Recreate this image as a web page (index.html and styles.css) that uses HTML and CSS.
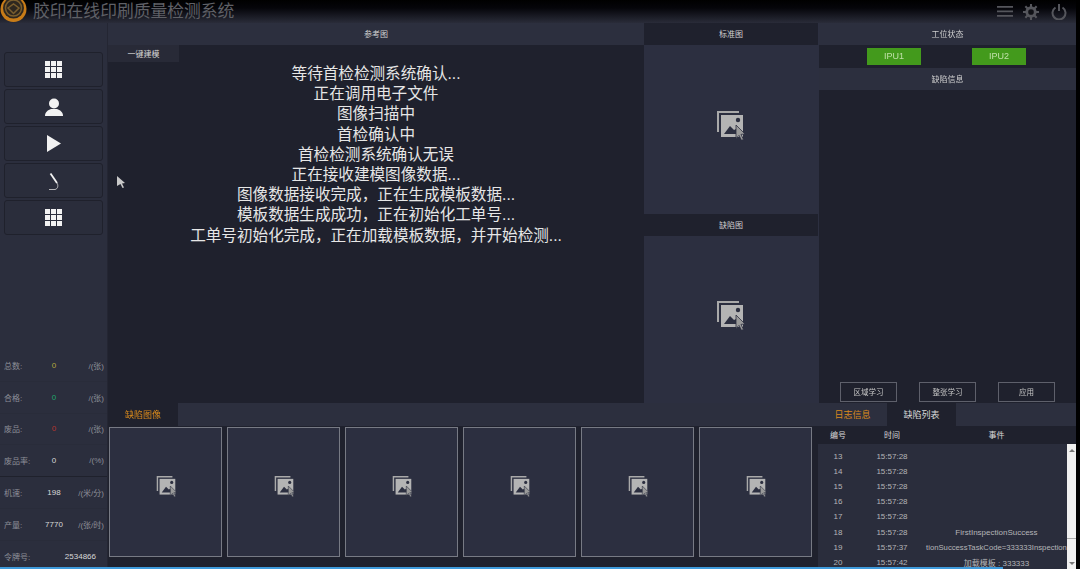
FILE: index.html
```html
<!DOCTYPE html>
<html lang="zh-CN">
<head>
    <meta charset="UTF-8">
    <meta name="viewport" content="width=device-width, initial-scale=1.0">
    <title>胶印在线印刷质量检测系统</title>
    <link rel="stylesheet" href="styles.css">
</head>
<body>
    <svg class="defs" width="0" height="0">
        <symbol id="pic" viewBox="0 0 28 30">
            <path d="M1 1h22v2H3v19H1z" fill="#a9a9a9"/>
            <path d="M5 5h22v22H5z" fill="#b4b4b4"/>
            <circle cx="22" cy="10" r="2.2" fill="#2c2f40"/>
            <path d="M8 24l6-8 4 4 2-1 4 5z" fill="#2c2f40"/>
            <path d="M20 15l9 9-4 .4 2.5 5-2 1-2.500-5-3 3z" fill="#9a9a9a" stroke="#2c2f40" stroke-width=".8"/>
        </symbol>
        <symbol id="dots" viewBox="0 0 17 17">
            <path d="M0 0h5v5H0zM6 0h5v5H6zM12 0h5v5h-5zM0 6h5v5H0zM6 6h5v5H6zM12 6h5v5h-5zM0 12h5v5H0zM6 12h5v5H6zM12 12h5v5h-5z" fill="#f2f2f2"/>
        </symbol>
    </svg>

    <header class="topbar">
        <svg class="logo" width="27" height="23" viewBox="0 0 27 23">
            <circle cx="13.500" cy="9" r="13" fill="#c87c18"/>
            <circle cx="13.500" cy="8" r="10.500" fill="#2e271f"/>
            <circle cx="13.500" cy="8" r="8" fill="none" stroke="#7a5e2e" stroke-width="1.500"/>
            <path d="M8 8l5.500 5.500L19 8l-5.500-4z" fill="none" stroke="#7a5e2e" stroke-width="1.500"/>
        </svg>
        <h1>胶印在线印刷质量检测系统</h1>
        <div class="top-icons">
            <svg class="icon-menu" width="16" height="11" viewBox="0 0 16 11"><path d="M0 0h16v1.800H0zM0 4.500h16v1.800H0zM0 9h16v1.800H0z" fill="#55565c"/></svg>
            <svg class="icon-gear" width="16" height="16" viewBox="0 0 17 17"><circle cx="8.500" cy="8.500" r="4.500" fill="none" stroke="#55565c" stroke-width="3"/><path d="M8.500 0v17M0 8.500h17M2.500 2.500l12 12M14.500 2.500l-12 12" stroke="#55565c" stroke-width="2.200"/><circle cx="8.500" cy="8.500" r="3" fill="#101116"/></svg>
            <svg width="16" height="16" viewBox="0 0 16 16"><path d="M4.500 3.500a6.500 6.500 0 1 0 7 0M8 0v7" fill="none" stroke="#55565c" stroke-width="2"/></svg>
        </div>
    </header>

    <div class="layout">
        <aside class="sidebar">
            <nav class="side-nav">
                <button class="nav-btn"><svg width="17" height="17"><use href="#dots"/></svg></button>
                <button class="nav-btn">
                    <svg width="18" height="18" viewBox="0 0 18 18"><circle cx="9" cy="5.500" r="5" fill="#f2f2f2"/><path d="M0 18c0-4 3-6 6-7h6c3 1 6 3 6 7z" fill="#f2f2f2"/></svg>
                </button>
                <button class="nav-btn"><svg width="14" height="17" viewBox="0 0 14 17"><path d="M0 0l14 8.500L0 17z" fill="#f2f2f2"/></svg></button>
                <button class="nav-btn">
                    <svg width="12" height="18" viewBox="0 0 12 18"><path d="M2.500 1.500L9 11" stroke="#f2f2f2" stroke-width="1.800" fill="none"/><path d="M9 11c1.500 2 1 6-2 6.500H1" stroke="#d8d8d8" stroke-width=".8" fill="none"/></svg>
                </button>
                <button class="nav-btn"><svg width="17" height="17"><use href="#dots"/></svg></button>
            </nav>
            <div class="stats">
                <div class="stat"><span>总数:</span><b class="yellow">0</b><span>/(张)</span></div>
                <div class="stat"><span>合格:</span><b class="green">0</b><span>/(张)</span></div>
                <div class="stat"><span>废品:</span><b class="red">0</b><span>/(张)</span></div>
                <div class="stat strong-line"><span>废品率:</span><b>0</b><span>/(%)</span></div>
                <div class="stat"><span>机速:</span><b>198</b><span>/(米/分)</span></div>
                <div class="stat"><span>产量:</span><b>7770</b><span>/(张/时)</span></div>
                <div class="stat token"><span>令牌号:</span><b>2534866</b></div>
            </div>
        </aside>

        <main class="main">
            <section class="upper">
                <div class="col col-ref">
                    <div class="col-title">参考图</div>
                    <div class="ref-body">
                        <div class="tab-build">一键建模</div>
                        <div class="messages">
                            <p>等待首检检测系统确认...</p>
                            <p>正在调用电子文件</p>
                            <p>图像扫描中</p>
                            <p>首检确认中</p>
                            <p>首检检测系统确认无误</p>
                            <p>正在接收建模图像数据...</p>
                            <p>图像数据接收完成，正在生成模板数据...</p>
                            <p>模板数据生成成功，正在初始化工单号...</p>
                            <p>工单号初始化完成，正在加载模板数据，并开始检测...</p>
                        </div>
                    </div>
                </div>
                <div class="col col-pics">
                    <div class="col-title dark">标准图</div>
                    <div class="pic-box first"><svg width="30" height="30"><use href="#pic"/></svg></div>
                    <div class="col-title dark">缺陷图</div>
                    <div class="pic-box"><svg width="30" height="30"><use href="#pic"/></svg></div>
                </div>
                <div class="col col-status">
                    <div class="col-title">工位状态</div>
                    <div class="ipu-row">
                        <span class="ipu">IPU1</span>
                        <span class="ipu">IPU2</span>
                    </div>
                    <div class="col-title">缺陷信息</div>
                    <div class="defect-info"></div>
                    <div class="actions">
                        <button class="action">区域学习</button>
                        <button class="action">整张学习</button>
                        <button class="action">应用</button>
                    </div>
                </div>
            </section>

            <section class="lower">
                <div class="thumbs-panel">
                    <div class="tabs"><span class="tab active-orange">缺陷图像</span></div>
                    <div class="thumbs">
                        <div class="thumb"><svg width="20" height="22"><use href="#pic"/></svg></div>
                        <div class="thumb"><svg width="20" height="22"><use href="#pic"/></svg></div>
                        <div class="thumb"><svg width="20" height="22"><use href="#pic"/></svg></div>
                        <div class="thumb"><svg width="20" height="22"><use href="#pic"/></svg></div>
                        <div class="thumb"><svg width="20" height="22"><use href="#pic"/></svg></div>
                        <div class="thumb"><svg width="20" height="22"><use href="#pic"/></svg></div>
                    </div>
                </div>
                <div class="log-panel">
                    <div class="tabs">
                        <span class="tab log-tab orange">日志信息</span>
                        <span class="tab log-tab current">缺陷列表</span>
                    </div>
                    <div class="log-head"><span>编号</span><span>时间</span><span>事件</span></div>
                    <div class="log-wrap">
                        <div class="log-rows">
                            <div class="log-row"><span>13</span><span>15:57:28</span><span></span></div>
                            <div class="log-row"><span>14</span><span>15:57:28</span><span></span></div>
                            <div class="log-row"><span>15</span><span>15:57:28</span><span></span></div>
                            <div class="log-row"><span>16</span><span>15:57:28</span><span></span></div>
                            <div class="log-row"><span>17</span><span>15:57:28</span><span></span></div>
                            <div class="log-row"><span>18</span><span>15:57:28</span><span>FirstInspectionSuccess</span></div>
                            <div class="log-row"><span>19</span><span>15:57:37</span><span class="tight">tionSuccessTaskCode=333333Inspection</span></div>
                            <div class="log-row"><span>20</span><span>15:57:42</span><span>加载模板 : 333333</span></div>
                        </div>
                        <div class="scrollbar">
                            <span class="arrow up"></span>
                            <span class="thumb-bar"></span>
                            <span class="arrow down"></span>
                        </div>
                    </div>
                </div>
            </section>
        </main>
        <div class="edge"></div>
    </div>

    <!-- 鼠标和底部任务条 -->
    <svg class="cursor" width="9" height="12" viewBox="0 0 9 12"><path d="M0 0l8 7-3 .5 2 4-1.500.5-2-4L0 10z" fill="#c9c9c9"/></svg>
    <div class="task-strip"></div>
</body>
</html>
```

FILE: styles.css
```css
* {
    box-sizing: border-box;
}
body {
    margin: 0;
    width: 1080px;
    height: 569px;
    overflow: hidden;
    position: relative;
    background-color: #1f212d;
    color: #d8d8d8;
    font-family: "Liberation Sans", "Noto Sans CJK SC", sans-serif;
    font-size: 8px;
    filter: blur(.35px);
}
.defs {
    position: absolute;
}
p, h1 {
    margin: 0;
}

/* 顶部 */
.topbar {
    height: 23px;
    display: flex;
    align-items: center;
    background: linear-gradient(#000, #05050a 35%, #2a2c39);
}
.logo {
    flex-shrink: 0;
}
.topbar h1 {
    margin-left: 6px;
    font-size: 16.800px;
    line-height: 21px;
    font-weight: 400;
    color: #5f6066;
}
.top-icons {
    margin-left: auto;
    margin-right: 13px;
    display: flex;
    align-items: center;
}
.icon-gear {
    margin: 0 12px 0 10px;
}

.layout {
    height: 546px;
    display: flex;
}

/* 左侧 */
.sidebar {
    width: 108px;
    background-color: #2b2e3d;
    border-right: 1px solid #242633;
    flex-shrink: 0;
    overflow: hidden;
}
.side-nav {
    padding: 29px 4px 0 4px;
    display: flex;
    flex-direction: column;
    gap: 2px;
}
.nav-btn {
    height: 35px;
    padding: 0;
    display: flex;
    align-items: center;
    justify-content: center;
    background-color: #2a2d3b;
    border: 1px solid #1f212c;
    border-radius: 3px;
}
.stats {
    margin-top: 115px;
}
.stat {
    height: 31.800px;
    padding: 0 3px 0 4px;
    display: grid;
    grid-template-columns: 32px 36px 1fr;
    align-items: center;
    color: #8d8f98;
    border-bottom: 1px solid #292c3a;
}
.stat.strong-line {
    border-bottom-color: #1f212c;
}
.stat b {
    font-weight: 400;
    text-align: center;
    color: #d8d8d8;
}
.stat span:last-child {
    text-align: right;
}
.stat .yellow { color: #b3a63d; }
.stat .green { color: #1fa56b; }
.stat .red { color: #b5352f; }
.stat.token {
    grid-template-columns: 36px 1fr;
    padding-right: 11px;
    border-bottom: 0;
}
.stat.token b {
    text-align: right;
}

/* 主区域 */
.main {
    width: 968px;
    display: flex;
    flex-direction: column;
}
.upper {
    height: 380px;
    display: grid;
    grid-template-columns: 536px 174px 258px;
}
.col {
    display: flex;
    flex-direction: column;
    min-height: 0;
}
.col-title {
    height: 22px;
    line-height: 24px;
    text-align: center;
    background-color: #2c2f3e;
    color: #cfcfcf;
    flex-shrink: 0;
}
.col-title.dark {
    background-color: #1f212d;
}
.ref-body {
    flex: 1;
    background-color: #1f212d;
}
.tab-build {
    width: 71px;
    height: 17px;
    line-height: 19px;
    text-align: center;
    background-color: #282a37;
}
.messages {
    margin-top: 2px;
    text-align: center;
    font-size: 15.600px;
    line-height: 20.200px;
    color: #e6e6e6;
}
.col-pics {
    background-color: #2c2f40;
}
.pic-box {
    flex: 1;
    padding: 0 2px 9px 0;
    display: flex;
    align-items: center;
    justify-content: center;
    background-color: #2c2f40;
}
.pic-box.first {
    flex: none;
    height: 169px;
}
.col-status {
    border-left: 1px solid #2c2f40;
}
.ipu-row {
    height: 23px;
    display: flex;
    align-items: center;
    background-color: #1f212d;
    padding-left: 48px;
    gap: 51px;
}
.ipu {
    width: 54px;
    height: 17px;
    line-height: 17px;
    text-align: center;
    font-size: 9px;
    color: #bfe0a8;
    background-color: #439a1c;
}
.defect-info {
    flex: 1;
}
.actions {
    height: 22px;
    padding: 0 0 1px 21px;
    display: flex;
    align-items: center;
    gap: 22px;
}
.action {
    width: 57px;
    height: 20px;
    padding: 0;
    background: none;
    border: 1px solid #5e606b;
    color: #c4c4c4;
    font: inherit;
    font-size: 7.500px;
}

/* 下部 */
.lower {
    flex: 1;
    display: grid;
    grid-template-columns: 710px 258px;
    min-height: 0;
}
.tabs {
    height: 23px;
    display: flex;
    background-color: #2c2f3e;
}
.tab {
    display: block;
    line-height: 25px;
    text-align: center;
    font-size: 9px;
}
.active-orange {
    width: 70px;
    color: #d98a1c;
    background-color: #1f212d;
}
.thumbs {
    padding: 1px 8px 0 1px;
    display: grid;
    grid-template-columns: repeat(6, 113px);
    gap: 5px;
}
.thumb {
    height: 130px;
    padding-bottom: 12px;
    display: flex;
    align-items: center;
    justify-content: center;
    background-color: #2c2f40;
    border: 1px solid #777a84;
}
.log-tab {
    width: 69px;
}
.orange {
    color: #d98a1c;
}
.current {
    color: #d8d8d8;
    background-color: #1f212d;
}
.log-head {
    height: 18px;
    padding: 0 9px 2px 0;
    display: grid;
    grid-template-columns: 40px 68px 141px;
    align-items: center;
    text-align: center;
    background-color: #1f212d;
}
.log-wrap {
    display: flex;
    height: 125px;
    background-color: #2a2d3c;
}
.log-rows {
    width: 249px;
    padding-top: 5px;
    overflow: hidden;
}
.log-row {
    height: 15.100px;
    display: grid;
    grid-template-columns: 40px 68px 141px;
    align-items: center;
    text-align: center;
    white-space: nowrap;
    color: #b5b5b8;
}
.tight {
    font-size: 7.700px;
}
.scrollbar {
    width: 9px;
    background-color: #f0f0f0;
    display: flex;
    flex-direction: column;
    align-items: center;
}
.arrow {
    width: 0;
    height: 0;
    border-left: 3px solid transparent;
    border-right: 3px solid transparent;
}
.arrow.up {
    margin-top: 5px;
    border-bottom: 3px solid #777;
}
.arrow.down {
    margin-top: auto;
    margin-bottom: 4px;
    border-top: 3px solid #777;
}
.thumb-bar {
    width: 100%;
    height: 84px;
    margin-top: 3px;
    border-bottom: 1px solid #aaa;
}
.edge {
    width: 4px;
    background-color: #000;
    position: absolute;
    top: 0;
    right: 0;
    height: 569px;
}
.cursor {
    position: absolute;
    left: 117px;
    top: 176px;
}
.task-strip {
    position: absolute;
    left: 0;
    bottom: 0;
    width: 1003px;
    height: 2px;
    background-color: #3f9bdc;
}
```
